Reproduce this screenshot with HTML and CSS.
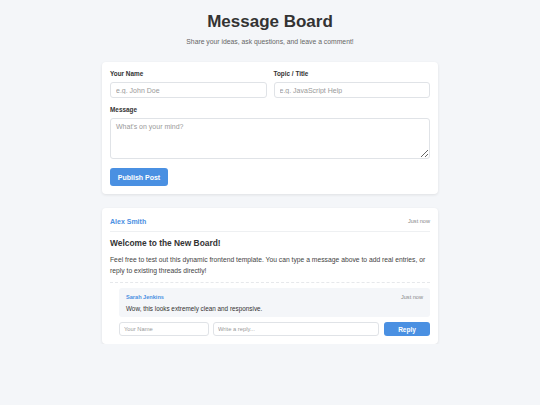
FILE: index.html
```html
<!DOCTYPE html>
<html lang="en">
<head>
<meta charset="utf-8">
<title>Message Board</title>
<link rel="stylesheet" href="styles.css">
</head>
<body>
<div class="container">
  <header class="page-header">
    <h1>Message Board</h1>
    <p class="subtitle">Share your ideas, ask questions, and leave a comment!</p>
  </header>

  <section class="card form-card">
    <div class="row">
      <div class="group">
        <label class="label">Your Name</label>
        <input class="input" type="text" placeholder="e.g. John Doe">
      </div>
      <div class="group">
        <label class="label">Topic / Title</label>
        <input class="input" type="text" placeholder="e.g. JavaScript Help">
      </div>
    </div>
    <div class="group msg-group">
      <label class="label">Message</label>
      <textarea class="textarea" placeholder="What's on your mind?"></textarea>
    </div>
    <button class="btn publish">Publish Post</button>
  </section>

  <article class="card post">
    <div class="post-head">
      <span class="author">Alex Smith</span>
      <span class="time">Just now</span>
    </div>
    <h2 class="post-title">Welcome to the New Board!</h2>
    <p class="post-body">Feel free to test out this dynamic frontend template. You can type a message above to add real entries, or reply to existing threads directly!</p>
    <div class="replies">
      <div class="reply">
        <div class="reply-head">
          <span class="reply-author">Sarah Jenkins</span>
          <span class="reply-time">Just now</span>
        </div>
        <p class="reply-text">Wow, this looks extremely clean and responsive.</p>
      </div>
      <div class="reply-form">
        <input class="input small name-in" type="text" placeholder="Your Name">
        <input class="input small text-in" type="text" placeholder="Write a reply...">
        <button class="btn reply-btn">Reply</button>
      </div>
    </div>
  </article>
</div>
</body>
</html>
```

FILE: styles.css
```css
* { box-sizing: border-box; }
html, body {
  margin: 0;
  padding: 0;
  background: #f4f6f9;
  font-family: "Liberation Sans", Arial, sans-serif;
  color: #333;
}
.container {
  width: 336px;
  margin: 0 auto;
  padding-top: 12px;
}
.page-header { text-align: center; }
h1 {
  margin: 0;
  font-size: 17px;
  line-height: 20px;
  font-weight: 700;
  color: #333;
}
.subtitle {
  margin: 5px 0 0;
  font-size: 6.8px;
  line-height: 10px;
  color: #666;
}
.card {
  background: #fff;
  border-radius: 4px;
  box-shadow: 0 1px 3px rgba(0,0,0,0.09);
  padding: 8px;
}
.form-card { margin-top: 15px; }
.row {
  display: flex;
  gap: 7px;
}
.group {
  flex: 1;
  display: flex;
  flex-direction: column;
}
.label {
  font-size: 6.4px;
  line-height: 8px;
  font-weight: 700;
  color: #333;
  margin-bottom: 4px;
}
.input, .textarea {
  font-family: "Liberation Sans", Arial, sans-serif;
  border: 1px solid #e0e3e7;
  border-radius: 3px;
  background: #fff;
  color: #333;
  outline: none;
}
.input {
  height: 16px;
  padding: 0 5px;
  font-size: 7px;
}
.input::placeholder, .textarea::placeholder { color: #999; }
.msg-group { margin-top: 8px; }
.textarea {
  height: 41px;
  padding: 4px 5px;
  font-size: 7px;
  resize: vertical;
  display: block;
  width: 100%;
}
.btn {
  font-family: "Liberation Sans", Arial, sans-serif;
  background: #4a90e2;
  color: #fff;
  border: none;
  border-radius: 3px;
  font-weight: 700;
  cursor: pointer;
}
.publish {
  margin-top: 9px;
  height: 18px;
  width: 58px;
  padding: 0;
  font-size: 7px;
  display: block;
}
.post { margin-top: 14px; }
.post-head {
  display: flex;
  justify-content: space-between;
  align-items: center;
  line-height: 11px;
  padding-bottom: 4px;
  border-bottom: 1px solid #eef0f2;
}
.author {
  color: #4a90e2;
  font-weight: 700;
  font-size: 7px;
}
.time, .reply-time {
  color: #888;
  font-size: 5.6px;
}
.post-title {
  margin: 6px 0 0;
  font-size: 8.4px;
  line-height: 11px;
  font-weight: 700;
  color: #333;
}
.post-body {
  margin: 5px 0 0;
  font-size: 6.75px;
  line-height: 11px;
  color: #444;
}
.replies {
  margin-top: 6px;
  border-top: 1px dashed #e6e8eb;
  padding: 5px 0 0 9px;
}
.reply {
  background: #f4f6f9;
  border-radius: 3px;
  padding: 5px 7px 4px;
}
.reply-head {
  display: flex;
  justify-content: space-between;
  align-items: center;
  height: 8px;
}
.reply-author {
  color: #4a90e2;
  font-weight: 700;
  font-size: 5.6px;
}
.reply-text {
  margin: 3px 0 0;
  font-size: 6.35px;
  line-height: 9px;
  color: #333;
}
.reply-form {
  display: flex;
  margin-top: 5px;
  gap: 4px;
}
.small {
  height: 14px;
  font-size: 5.8px;
  padding: 0 4px;
}
.name-in { width: 90px; flex: none; }
.text-in { flex: 1; min-width: 0; }
.reply-btn {
  width: 46px;
  height: 14px;
  font-size: 6.5px;
  margin-left: 1px;
  padding: 0;
  flex: none;
}
```
